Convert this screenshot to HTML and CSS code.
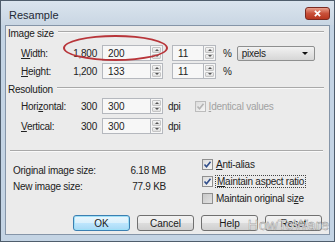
FILE: index.html
```html
<!DOCTYPE html>
<html lang="en">
<head>
    <meta charset="UTF-8">
    <title>Resample</title>
    <link rel="stylesheet" href="styles.css">
</head>
<body>
    <div class="window">
        <div class="titlebar">
            <span class="title">Resample</span>
            <button class="close" title="Close">
                <svg viewBox="0 0 10 8"><path d="M2 1l6 6M8 1L2 7"/></svg>
            </button>
        </div>
        <div class="client">
            <div class="group-head"><span>Image size</span><div class="line"></div></div>

            <div class="row row-width">
                <label class="lbl"><u>W</u>idth:</label>
                <span class="orig">1,800</span>
                <div class="spin"><input class="box" type="text" value="200"><div class="arrows"><i class="up"></i><i class="down"></i></div></div>
                <div class="spin small"><input class="box" type="text" value="11"><div class="arrows"><i class="up"></i><i class="down"></i></div></div>
                <span class="unit">%</span>
                <div class="select"><span>pixels</span><i class="caret"></i></div>
            </div>
            <div class="row row-height">
                <label class="lbl"><u>H</u>eight:</label>
                <span class="orig">1,200</span>
                <div class="spin"><input class="box" type="text" value="133"><div class="arrows"><i class="up"></i><i class="down"></i></div></div>
                <div class="spin small"><input class="box" type="text" value="11"><div class="arrows"><i class="up"></i><i class="down"></i></div></div>
                <span class="unit">%</span>
            </div>

            <div class="group-head res-head"><span>Resolution</span><div class="line"></div></div>

            <div class="row row-hor">
                <label class="lbl">Hori<u>z</u>ontal:</label>
                <span class="orig">300</span>
                <div class="spin"><input class="box" type="text" value="300"><div class="arrows"><i class="up"></i><i class="down"></i></div></div>
                <span class="dpi">dpi</span>
                <label class="check disabled"><span class="cb"><svg viewBox="0 0 9 9"><path d="M1.5 4.5l2 2.2L7.5 1.8"/></svg></span><span><u>I</u>dentical values</span></label>
            </div>
            <div class="row row-ver">
                <label class="lbl"><u>V</u>ertical:</label>
                <span class="orig">300</span>
                <div class="spin"><input class="box" type="text" value="300"><div class="arrows"><i class="up"></i><i class="down"></i></div></div>
                <span class="dpi">dpi</span>
            </div>

            <div class="separator"></div>

            <div class="bottom">
                <div class="sizes">
                    <div class="size-row"><span>Original image size:</span><span>6.18 MB</span></div>
                    <div class="size-row"><span>New image size:</span><span>77.9 KB</span></div>
                </div>
                <div class="checks">
                    <label class="check"><span class="cb"><svg viewBox="0 0 9 9"><path d="M1.5 4.5l2 2.2L7.5 1.8"/></svg></span><span><u>A</u>nti-alias</span></label>
                    <label class="check"><span class="cb"><svg viewBox="0 0 9 9"><path d="M1.5 4.5l2 2.2L7.5 1.8"/></svg></span><span class="focus"><u>M</u>aintain aspect ratio</span></label>
                    <label class="check"><span class="cb empty"></span><span>Maintain original si<u>z</u>e</span></label>
                </div>
            </div>

            <div class="buttons">
                <button class="btn default">OK</button>
                <button class="btn">Cancel</button>
                <button class="btn">Help</button>
                <button class="btn">Reset</button>
            </div>

            <div class="ellipse"></div>
            <div class="watermark">HowToWare</div>
        </div>
    </div>
</body>
</html>
```

FILE: styles.css
```css
/* Base */
* {
    box-sizing: border-box;
    margin: 0;
    padding: 0;
}

body {
    width: 335px;
    height: 242px;
    overflow: hidden;
    font-family: "Liberation Sans", Arial, sans-serif;
    font-size: 10px;
    letter-spacing: -0.25px;
    color: #222;
    background: #fff;
}

/* Window frame */
.window {
    width: 335px;
    height: 242px;
    border: 1px solid #4f5d6c;
    background: #c4d4e4;
    padding: 0 4px 6px;
    display: flex;
    flex-direction: column;
}

.titlebar {
    height: 24px;
    margin: 0 -4px;
    padding: 0 4px 0 8px;
    display: flex;
    justify-content: space-between;
    align-items: flex-start;
    background: linear-gradient(#dae4ee, #c9d6e3);
}

.title {
    margin-top: 8px;
    font-size: 11px;
    letter-spacing: 0;
    color: #1f2a36;
}

.close {
    margin-top: 6px;
    width: 25px;
    height: 13px;
    border: 1px solid #7a2a22;
    border-radius: 3px;
    background: linear-gradient(#e9a08c, #c8503a 50%, #b8361f);
    display: flex;
    align-items: center;
    justify-content: center;
}

.close svg {
    width: 9px;
    height: 7px;
    stroke: #fff;
    stroke-width: 2;
    fill: none;
}

/* Client area */
.client {
    flex: 1;
    position: relative;
    background: #ebebeb;
    border: 1px solid #8595a8;
    padding: 0 5px 0 2px;
    display: flex;
    flex-direction: column;
}

.group-head {
    height: 14px;
    display: flex;
    align-items: center;
    gap: 4px;
    color: #1a1a1a;
}

.group-head .line {
    flex: 1;
    margin-top: -2px;
    border-top: 1px solid #a9a9a9;
    border-bottom: 1px solid #fafafa;
}

.res-head {
    margin-top: 3px;
}

.row {
    height: 16px;
    display: flex;
    align-items: center;
}

.row-width {
    margin-top: 5px;
}

.row-height {
    margin-top: 2px;
}

.row-hor {
    margin-top: 2px;
}

.row-ver {
    margin-top: 4px;
}

.lbl {
    margin-left: 13px;
    width: 48px;
}

.orig {
    width: 28px;
    text-align: right;
    margin-right: 5px;
}

/* Spin boxes */
.spin {
    display: flex;
    height: 16px;
}

.box {
    width: 48px;
    height: 16px;
    border: 1px solid #b5b8be;
    border-right: none;
    background: #f7f7f7;
    font: inherit;
    color: #222;
    padding-left: 5px;
    outline: none;
}

.spin.small {
    margin-left: 9px;
}

.spin.small .box {
    width: 31px;
}

.arrows {
    width: 13px;
    display: flex;
    flex-direction: column;
    border: 1px solid #b5b8be;
    background: #f7f7f7;
    padding: 1px;
    gap: 1px;
}

.arrows i {
    flex: 1;
    display: flex;
    align-items: center;
    justify-content: center;
    background: linear-gradient(#f4f4f4, #dedede);
    border: 1px solid #c4c4c4;
    border-radius: 1px;
}

.arrows i::after {
    content: "";
    border-left: 2px solid transparent;
    border-right: 2px solid transparent;
}

.arrows .up::after {
    border-bottom: 2px solid #555;
}

.arrows .down::after {
    border-top: 2px solid #555;
}

.unit {
    margin-left: 7px;
}

.dpi {
    margin-left: 5px;
}

/* Dropdown */
.select {
    margin-left: 5px;
    width: 78px;
    height: 15px;
    border: 1px solid #8e8f8f;
    border-radius: 2px;
    background: linear-gradient(#f2f2f2, #e4e4e4 50%, #d6d6d6);
    display: flex;
    align-items: center;
    justify-content: space-between;
    padding: 0 6px 0 4px;
}

.caret {
    border-left: 3px solid transparent;
    border-right: 3px solid transparent;
    border-top: 3px solid #111;
}

/* Checkboxes */
.check {
    display: flex;
    align-items: center;
    gap: 3px;
    height: 17px;
}

.row .check {
    margin-left: 14px;
}

.cb {
    width: 11px;
    height: 11px;
    border: 1px solid #8f8f8f;
    background: linear-gradient(135deg, #dcdcdc, #f6f6f6);
    display: flex;
    align-items: center;
    justify-content: center;
}

.cb svg {
    width: 9px;
    height: 9px;
    fill: none;
    stroke: #2f4d8a;
    stroke-width: 1.6;
}

.cb.empty {
    background: linear-gradient(135deg, #c8c8c8, #e2e2e2);
}

.check.disabled {
    color: #a2a2a2;
}

.check.disabled .cb {
    border-color: #bcbcbc;
}

.check.disabled .cb svg {
    stroke: #b4b4b4;
}

.focus {
    outline: 1px dotted #444;
    outline-offset: 0;
    padding: 0 1px;
}

/* Bottom section */
.separator {
    margin: 16px 1px 0 2px;
    border-top: 1px solid #a9a9a9;
    border-bottom: 1px solid #fafafa;
}

.bottom {
    display: flex;
    margin-top: 4px;
}

.sizes {
    width: 153px;
    margin-left: 5px;
    padding-top: 6px;
}

.size-row {
    height: 16px;
    display: flex;
    align-items: center;
    justify-content: space-between;
}

.checks {
    margin-left: 36px;
}

.buttons {
    display: flex;
    justify-content: flex-end;
    gap: 7px;
    margin-top: 8px;
    padding-right: 2px;
}

.btn {
    width: 57px;
    height: 16px;
    font: inherit;
    color: #1a1a1a;
    border: 1px solid #707070;
    border-radius: 3px;
    background: linear-gradient(#f2f2f2, #ebebeb 50%, #dddddd 51%, #cfcfcf);
}

.btn.default {
    border-color: #3c7fb1;
    box-shadow: inset 0 0 0 1px #9ee0f8;
    background: linear-gradient(#eaf6fd, #d9f0fc 50%, #bee6fd 51%, #a7d9f5);
}

/* Overlays */
.ellipse {
    position: absolute;
    left: 57px;
    top: 9px;
    width: 105px;
    height: 26px;
    border: 2px solid #b8353a;
    border-radius: 50%;
}

.watermark {
    position: absolute;
    right: 0;
    bottom: 1px;
    font-size: 15px;
    letter-spacing: 0;
    color: rgba(245, 245, 245, 0.85);
    -webkit-text-stroke: 0.4px #8c8c8c;
}
```
